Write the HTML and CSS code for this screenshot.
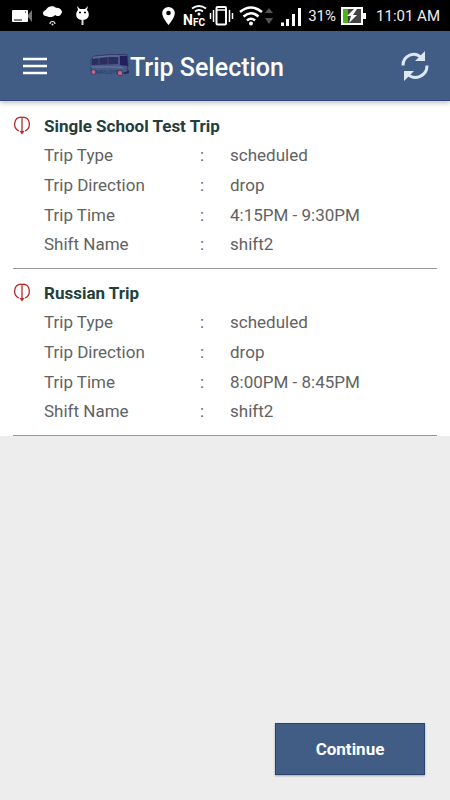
FILE: index.html
```html
<!DOCTYPE html>
<html lang="en">
<head>
<meta charset="utf-8">
<meta name="viewport" content="width=device-width, initial-scale=1">
<title>Trip Selection</title>
<link rel="stylesheet" href="styles.css">
</head>
<body>
<div class="status">
  <svg class="status-left" width="92" height="31" viewBox="0 0 92 31" aria-hidden="true">
    <rect x="12" y="10" width="16" height="12" rx="1" fill="#fff"/>
    <path d="M14 20h8M25 12h1" stroke="#000"/>
    <path d="M28 15l4-5v12l-4-5z" fill="#777"/>
    <path d="M46 16c-4 0-4-5 0-6 1-4 8-5 10-2 4-1 8 4 5 6-1 3-5 2-6 1-2 3-7 2-9 1z" fill="#fff"/>
    <path d="M50 24a2.500 2.500 0 0 1 5 0" fill="none" stroke="#ddd" stroke-width="1.200"/>
    <circle cx="52.500" cy="24.500" r="1" fill="#ddd"/>
    <path d="M77 6l3 3h5l3-3-1 4c4 5 1 10-4.500 10S74 15 78 10z" fill="#fff"/>
    <path d="M82.500 20v5" stroke="#ddd" stroke-width="2"/>
    <path d="M79 12.500h2M84 12.500h2" stroke="#000" stroke-width="1.500"/>
  </svg>
  <div class="status-right">
    <svg width="142" height="31" viewBox="162 0 142 31" aria-hidden="true">
      <path d="M170.500 7a6.300 6.300 0 0 0-6.300 6.300c0 4.700 6.300 11.700 6.300 11.700s6.300-7 6.300-11.700A6.300 6.300 0 0 0 170.500 7z" fill="#fff"/>
      <circle cx="170.500" cy="13" r="2.300" fill="#000"/>
      <text class="nfc" x="185" y="25">N</text>
      <text class="nfc-small" x="195" y="26">FC</text>
      <g fill="none" stroke="#fff" stroke-width="1.800">
        <path d="M194 8.500q7-5 14 0M197 11.500q4-3 8 0"/>
      </g>
      <circle cx="201" cy="14" r="1.500" fill="#fff"/>
      <g fill="none" stroke="#fff" stroke-width="2">
        <rect x="218.500" y="7" width="9.500" height="17.500" rx="1"/>
        <path d="M215.500 10v12M231.500 10v12" stroke-width="1.500"/>
        <path d="M212.500 13v6M234.500 13v6" stroke-width="1.500"/>
        <path d="M219 10h9" stroke-width="1.500"/>
      </g>
      <g fill="none" stroke="#fff" stroke-width="2.600">
        <path d="M242 12q11-9 22 0M245.500 16.500q7.500-6.500 15 0M249 20.500q4-3.500 8 0"/>
      </g>
      <circle cx="253" cy="23.500" r="2" fill="#fff"/>
      <path d="M267 13l4-5 4 5zM267 18h8l-4 6z" fill="#555"/>
      <path d="M283 22.500h3v3.500h-3zM288 19h3v7h-3zM294 14h3v12h-3zM300 8h3v18h-3z" fill="#fff"/>
    </svg>
    <span class="percent">31%</span>
    <svg class="battery" width="26" height="31" viewBox="342 0 26 31" aria-hidden="true">
      <rect x="343" y="8" width="20" height="16" fill="#444" stroke="#fff" stroke-width="2"/>
      <path d="M344 9h5v14h-5z" fill="#4eb518"/>
      <path d="M364 13h3v6h-3z" fill="#fff"/>
      <path d="M355 9l-7 7h4l-2 7 8-8h-4l4-6z" fill="#fff"/>
    </svg>
    <span class="clock">11:01 AM</span>
  </div>
</div>
<header class="bar">
  <button class="icon-button" type="button" aria-label="Menu">
    <svg width="24" height="18" viewBox="0 0 24 18"><path d="M0 2h24M0 9h24M0 16h24" stroke="#fff" stroke-width="2.500"/></svg>
  </button>
  <div class="brand">
    <svg width="40" height="24" viewBox="0 0 40 24" aria-hidden="true">
      <path d="M1 11V5l3-3L20 .5h17l1 10-1 8h-4" fill="#485a88" stroke="#343c6c"/>
      <path d="M2 5l17-2h9v7L2 11z" fill="#2a2f62"/>
      <path d="M30 2h7l1 10-8-1z" fill="#21205c"/>
      <path d="M9 4v6M18 3v7" stroke="#4c5787" stroke-width=".7"/>
      <path d="M3 3.500L19 2h10" fill="none" stroke="#77779f" stroke-width=".8"/>
      <path d="M1 13h27l5 1" fill="none" stroke="#77779f"/>
      <path d="M1 13v4" stroke="#343c6c"/>
      <path d="M33 20l6-4v3l-3 1z" fill="#252855"/>
      <text class="logo-text" x="6" y="20">MPLOYE</text>
      <circle cx="3.500" cy="18" r="2.500" fill="#b96b8b" stroke="#493761"/>
      <circle cx="30" cy="19" r="2.700" fill="#b96b8b" stroke="#493761"/>
    </svg>
    <h1>Trip Selection</h1>
  </div>
  <button class="icon-button" type="button" aria-label="Refresh">
    <svg width="30" height="30" viewBox="0 0 30 30">
      <g fill="none" stroke="#dde7f4" stroke-width="3">
        <path d="M3 14.500C3 4 15 0 21 6.500"/>
        <path d="M27 14.500C27 25 15 30 8 23.500"/>
      </g>
      <path d="M25 0v10H15zM4 30V20h10z" fill="#dde7f4"/>
    </svg>
  </button>
</header>
<main>
  <ul class="trips">
    <li class="trip">
      <svg class="marker" width="16" height="19" viewBox="0 0 16 19" aria-hidden="true"><path d="M5 15C-1.500 12-.5 1.500 7 1.200L8 2l1-.8C16.500 1.500 17.500 12 11 15M8 2v15" fill="none" stroke="#b8292b" stroke-width="1.300"/><path d="M5.500 15h5L8 18.500z" fill="#b8292b"/></svg>
      <div class="details">
        <h2>Single School Test Trip</h2>
        <span>Trip Type</span><span>:</span><span>scheduled</span>
        <span>Trip Direction</span><span>:</span><span>drop</span>
        <span>Trip Time</span><span>:</span><span>4:15PM - 9:30PM</span>
        <span>Shift Name</span><span>:</span><span>shift2</span>
      </div>
    </li>
    <li class="trip">
      <svg class="marker" width="16" height="19" viewBox="0 0 16 19" aria-hidden="true"><path d="M5 15C-1.500 12-.5 1.500 7 1.200L8 2l1-.8C16.500 1.500 17.500 12 11 15M8 2v15" fill="none" stroke="#b8292b" stroke-width="1.300"/><path d="M5.500 15h5L8 18.500z" fill="#b8292b"/></svg>
      <div class="details">
        <h2>Russian Trip</h2>
        <span>Trip Type</span><span>:</span><span>scheduled</span>
        <span>Trip Direction</span><span>:</span><span>drop</span>
        <span>Trip Time</span><span>:</span><span>8:00PM - 8:45PM</span>
        <span>Shift Name</span><span>:</span><span>shift2</span>
      </div>
    </li>
  </ul>
</main>
<footer class="actions"><button class="continue" type="button">Continue</button></footer>
</body>
</html>
```
FILE: styles.css
```css
* { box-sizing: border-box; }

body {
  display: flex;
  flex-direction: column;
  min-height: 100vh;
  margin: 0;
  background: #ededed;
  color: #626262;
  font-family: Roboto, "Liberation Sans", sans-serif;
  font-size: 17px;
}

button {
  border: 0;
  cursor: pointer;
  font: inherit;
}

svg { display: block; }

.status {
  display: flex;
  justify-content: space-between;
  height: 31px;
  padding-right: 10px;
  background: #000;
  color: #eee;
  font-size: 15px;
  line-height: 33px;
}

.status-right { display: flex; }
.percent { margin-left: 6px; }
.battery { margin-left: 5px; }
.clock { margin-left: 9px; }
.nfc { fill: #fff; font-size: 14px; font-weight: 700; }
.nfc-small { fill: #fff; font-size: 10px; font-weight: 700; }

.bar {
  display: flex;
  align-items: center;
  height: 70px;
  padding: 0 15px 0 18px;
  background: #415d86;
  border-bottom: 1px solid #34477c;
  box-shadow: 0 2px 5px rgba(0, 0, 0, 0.25);
  z-index: 1;
}

.icon-button {
  padding: 5px;
  background: none;
}

.brand {
  display: flex;
  flex: 1;
  align-items: center;
  margin-left: 38px;
}

.logo-text { fill: #2c3565; font-size: 6px; }

h1 {
  margin: 0;
  padding-top: 4px;
  color: #fff;
  font-size: 25px;
  font-weight: 500;
  line-height: 32px;
}

.trips {
  margin: 0;
  padding: 1px 0 0;
  background: #fff;
  list-style: none;
}

.trip {
  display: flex;
  gap: 14px;
  margin: 0 13px;
  padding: 9px 0 9px 1px;
  border-bottom: 1px solid #999;
}

.marker { margin-top: 5px; }

.details {
  display: grid;
  flex: 1;
  grid-template-columns: 156px 30px 1fr;
  grid-template-rows: repeat(5, 1fr);
  align-items: center;
  min-height: 148px;
}

h2 {
  grid-column: 1 / -1;
  margin: 0;
  color: #223f3d;
  font-size: 17px;
  font-weight: 700;
}

.actions {
  display: flex;
  justify-content: flex-end;
  margin-top: auto;
  padding: 25px;
}

.continue {
  width: 150px;
  height: 52px;
  background: #415d86;
  border: 1px solid #29456f;
  box-shadow: 0 1px 2px rgba(0, 0, 0, 0.3);
  color: #fff;
  font-weight: 700;
}
```
